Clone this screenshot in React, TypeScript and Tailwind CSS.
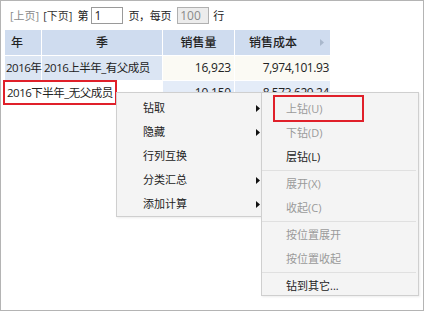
import React from "react";

const T = { fontFamily: '"Open Sans", "Noto Sans CJK SC", sans-serif' };

function Arrow() {
  return (
    <svg width="4" height="7" viewBox="0 0 4 7" className="absolute right-[2px]">
      <path d="M0 0 L4 3.5 L0 7 Z" fill="#111" />
    </svg>
  );
}

function SubItem({ children, dim }: { children: React.ReactNode; dim?: boolean }) {
  return (
    <div className={"h-[24px] flex items-center pl-[24px] " + (dim ? "text-[#9a9a9a]" : "text-[#222]")}>
      {children}
    </div>
  );
}

function Sep() {
  return <div className="h-[1px] bg-[#e0e0e0] my-[1px] mr-[2px]" />;
}

export default function App() {
  const mainItems = [
    { t: "钻取", a: true },
    { t: "隐藏", a: true },
    { t: "行列互换", a: false },
    { t: "分类汇总", a: true },
    { t: "添加计算", a: true },
  ];
  return (
    <div
      className="relative w-[424px] h-[311px] bg-white border border-[#b4b4b4] text-[12px] text-[#222] overflow-hidden"
      style={T}
    >
      {/* toolbar */}
      <div className="flex items-center h-[17px] mt-[6px] ml-[9px] leading-none text-[11px]">
        <span className="text-[#8a8a8a]">[上页]</span>
        <span className="ml-[4px] text-[#333]">[下页]</span>
        <span className="ml-[5px]">第</span>
        <div className="ml-[3px] w-[32px] h-[17px] border border-[#9a9a9a] flex items-center pl-[2px] text-[12px]">1</div>
        <span className="ml-[5px] tracking-[-0.3px]">页，每页</span>
        <div className="ml-[6px] w-[32px] h-[17px] border border-[#b0b0b0] bg-[#ececec] text-[#8a8a8a] flex items-center pl-[2px] text-[12px]">100</div>
        <span className="ml-[4px]">行</span>
      </div>

      {/* table */}
      <div className="ml-[4px] mt-[6px] w-[325px]">
        <div className="flex h-[25px] bg-[#cfdcef] font-medium">
          <div className="w-[37px] border-r border-white flex items-center pl-[6px]">年</div>
          <div className="w-[121px] border-r border-white flex items-center justify-center">季</div>
          <div className="w-[72px] border-r border-white flex items-center justify-center">销售量</div>
          <div className="flex-1 flex items-center pl-[14px] relative">
            销售成本
            <svg width="4" height="7" viewBox="0 0 4 7" className="absolute right-[6px]">
              <path d="M0 0 L4 3.5 L0 7 Z" fill="#a9b8cc" />
            </svg>
          </div>
        </div>
        <div className="flex h-[24px] mt-[1px]">
          <div className="w-[37px] bg-[#dbe5f3] border-r border-white flex items-center pl-[1px] whitespace-nowrap tracking-[-0.5px] text-[11.5px]">2016年</div>
          <div className="w-[121px] bg-[#dbe5f3] border-r border-white flex items-center pl-[2px] whitespace-nowrap text-[11.5px] tracking-[-0.5px]">2016上半年_有父成员</div>
          <div className="w-[72px] bg-[#fbfaf4] border-r border-white flex items-center justify-end pr-[3px] tracking-[-0.2px]">16,923</div>
          <div className="flex-1 bg-[#fbfaf4] flex items-center justify-end pr-[1px] tracking-[-0.4px]">7,974,101.93</div>
        </div>
        <div className="flex h-[24px] mt-[1px]">
          <div className="w-[158px] flex items-center pl-[2px] whitespace-nowrap text-[11.5px] tracking-[-0.5px]">2016下半年_无父成员</div>
          <div className="w-[72px] bg-[#e4ecf8] border-r border-white flex items-center justify-end pr-[3px] tracking-[-0.2px]">10,150</div>
          <div className="flex-1 bg-[#e4ecf8] flex items-center justify-end pr-[1px] tracking-[-0.4px]">8,573,629.24</div>
        </div>
      </div>

      {/* red box around row 2 member */}
      <div className="absolute left-[2px] top-[79px] w-[114px] h-[25px] border-2 border-[#e0202a]" />

      {/* main menu */}
      <div className="absolute left-[115px] top-[91px] w-[147px] h-[125px] bg-[#f4f4f4] border border-[#cfcfcf] shadow-[1px_1px_2px_rgba(0,0,0,0.08)] pt-[3px] text-[11px]">
        {mainItems.map((m) => (
          <div key={m.t} className="relative h-[24px] flex items-center pl-[26px]">
            {m.t}
            {m.a && <Arrow />}
          </div>
        ))}
      </div>

      {/* submenu */}
      <div className="absolute left-[260px] top-[91px] w-[158px] h-[204px] bg-[#f4f4f4] border border-[#cfcfcf] shadow-[1px_1px_2px_rgba(0,0,0,0.08)] pt-[4px] text-[11px]">
        <SubItem dim>上钻(U)</SubItem>
        <SubItem dim>下钻(D)</SubItem>
        <SubItem>层钻(L)</SubItem>
        <Sep />
        <SubItem dim>展开(X)</SubItem>
        <SubItem dim>收起(C)</SubItem>
        <Sep />
        <SubItem dim>按位置展开</SubItem>
        <SubItem dim>按位置收起</SubItem>
        <Sep />
        <SubItem>钻到其它...</SubItem>
      </div>

      {/* red box around 上钻 */}
      <div className="absolute left-[272px] top-[94px] w-[91px] h-[27px] border-2 border-[#e0202a]" />
    </div>
  );
}
